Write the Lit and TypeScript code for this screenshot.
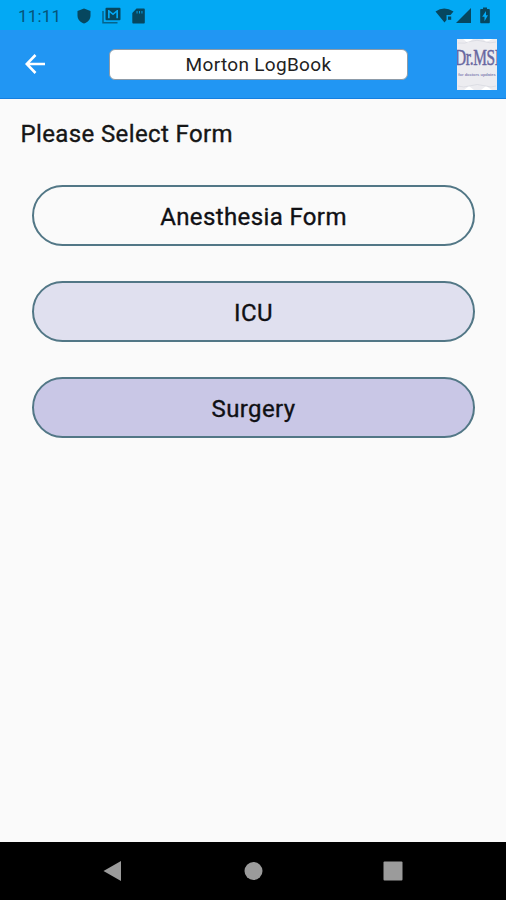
import { LitElement, html, svg, css } from "lit";
import { customElement, property } from "lit/decorators.js";
import { classMap } from "lit/directives/class-map.js";

@customElement("status-bar")
class StatusBar extends LitElement {
  static styles = css`
    :host { display: flex; height: 30px; background: #03a9f4; color: #06475f; align-items: center; box-sizing: border-box; padding: 1px 16px 0 18px; }
    .time { font: 400 17px/20px Roboto, sans-serif; letter-spacing: 0.2px; color: #065478; width: 59px; }
    svg { display: block; fill: currentColor; flex: none; }
    .shield { width: 14px; height: 16px; }
    .mail { width: 19px; height: 17px; margin-left: 11px; }
    .card { width: 13px; height: 16px; margin-left: 11px; }
    .gap { flex: 1; }
    .wifi { width: 19px; height: 16px; }
    .signal { width: 15px; height: 15px; margin-left: 2px; }
    .battery { width: 10px; height: 17px; margin-left: 9px; }
  `;
  render() {
    return html`
      <span class="time">11:11</span>
      <svg class="shield" viewBox="0 0 14 16"><path d="M7 0.500 13.500 3V7.500C13.500 11.300 10.800 14.300 7 15.500 3.200 14.300.5 11.300.5 7.500V3Z" /></svg>
      <svg class="mail" viewBox="0 0 19 17">
        <path d="M1 4V15.700H15.500" fill="none" stroke="currentColor" stroke-width="1.500" opacity=".7" />
        <path fill-rule="evenodd" d="M4.500.7H17.500Q18.500.7 18.500 1.700V12.300Q18.500 13.300 17.500 13.300H4.500Q3.500 13.300 3.500 12.300V1.700Q3.500.7 4.500.7ZM6 3V11.300H7.700V5.500L11 8.300 14.300 5.500V11.300H16V3H15L11 6.300 7 3Z" />
      </svg>
      <svg class="card" viewBox="0 0 13 16"><path fill-rule="evenodd" d="M4.500.5H12Q12.800.5 12.800 1.500V14.500Q12.800 15.500 12 15.500H1.200Q.3 15.500.3 14.500V5ZM4.600 3V5.500H5.500V3ZM7 3V5.500H7.900V3ZM9.500 3V5.500H10.400V3Z" /></svg>
      <span class="gap"></span>
      <svg class="wifi" viewBox="0 0 19 16">
        <path d="M.5 3.500Q9-2.500 18.500 3.500L15.500 7H11.500V12L9.500 14.500Z" />
        <path d="M13 8.500H16.200V11.800H13Z" />
      </svg>
      <svg class="signal" viewBox="0 0 15 15"><path d="M15 0V15H0Z" /></svg>
      <svg class="battery" viewBox="0 0 10 17"><path fill-rule="evenodd" d="M3 .5H7V2H9Q9.800 2 9.800 3V15.200Q9.800 16.200 9 16.200H1Q.2 16.200.2 15.200V3Q.2 2 1 2H3ZM6 4 2.200 9.800H4.500V14.200L8 8.300H6Z" /></svg>
    `;
  }
}

@customElement("brand-badge")
class BrandBadge extends LitElement {
  static styles = css`
    :host { display: flex; flex-direction: column; align-items: center; width: 40px; height: 51px; background: #ececf0; overflow: hidden; position: relative; }
    svg { position: absolute; inset: 0; fill: none; stroke: #d2d3dc; }
    .name { font: 400 23px/24px "Liberation Serif", serif; color: #6867a0; transform: scaleX(0.67); white-space: nowrap; margin-top: 7px; -webkit-text-stroke: 0.5px #6867a0; letter-spacing: -0.5px; }
    .tag { font: 700 4px/5px "Liberation Sans", sans-serif; color: #8584b4; white-space: nowrap; margin-top: 2px; }
  `;
  render() {
    return html`
      <svg width="40" height="51" viewBox="0 0 40 51">
        <path d="M6 0H16L11 4ZM26 0H36L29 3ZM7 51 12 47 17 51ZM24 51 29 47 35 51Z" fill="#fff" stroke="none" />
        <path d="M1 4Q8 5 13 2.500 20 0 27 2.500 33 5 39 3M1 47Q7 49 12 47 20 44 29 47 34 49 39 47" opacity=".6" />
      </svg>
      <span class="name">Dr.MSI</span>
      <span class="tag">for doctors updates</span>
    `;
  }
}

@customElement("form-button")
class FormButton extends LitElement {
  static styles = css`
    :host { display: block; }
    .pill { display: block; width: 100%; height: 61px; box-sizing: border-box; border: 2px solid #527786; border-radius: 31px; background: #fafafa; color: #101014; font: 400 24px/28px Roboto, sans-serif; -webkit-text-stroke: 0.35px #101014; letter-spacing: 0.38px; padding: 2px 0 0; }
    .light { background: #e0e0ef; }
    .deep { background: #c9c7e6; }
  `;
  @property() label = "";
  @property() tone = "plain";
  render() {
    return html`<button class=${classMap({ pill: true, [this.tone]: true })}>${this.label}</button>`;
  }
}

@customElement("app-root")
class AppRoot extends LitElement {
  static styles = css`
    :host { display: flex; flex-direction: column; height: 900px; background: #fafafa; font-family: Roboto, sans-serif; }
    header { display: flex; align-items: center; height: 69px; box-sizing: border-box; background: #2196f3; border-bottom: 1px solid #147fe0; padding: 0 9px 0 25px; }
    .back { width: 21px; height: 20px; fill: none; stroke: #fff; stroke-width: 2.600; }
    .title { width: 299px; height: 31px; box-sizing: border-box; margin: 0 auto 0 63px; background: #fff; border: 1px solid #8d9ba8; border-radius: 6px; text-align: center; font: 400 19px/29px Roboto, sans-serif; color: #222; letter-spacing: 0.32px; }
    main { flex: 1; padding: 20px 31px 0 32px; }
    h1 { margin: 0 0 36px -11.500px; font: 400 24px/30px Roboto, sans-serif; -webkit-text-stroke: 0.35px #161616; letter-spacing: 0.38px; color: #161616; }
    .forms { display: flex; flex-direction: column; gap: 35px; }
    nav { height: 58px; background: #000; display: flex; justify-content: space-between; align-items: center; box-sizing: border-box; padding: 0 103px; }
    nav svg { width: 20px; height: 22px; fill: #9b9b9b; }
  `;
  render() {
    const forms = [
      { label: "Anesthesia Form", tone: "plain" },
      { label: "ICU", tone: "light" },
      { label: "Surgery", tone: "deep" },
    ];
    const keys = [
      svg`<path d="M0.500 11 18 1V21Z" />`,
      svg`<circle cx="10.500" cy="11" r="9" />`,
      svg`<rect x="0.500" y="1.500" width="19" height="19" rx="1" />`,
    ];
    return html`
      <status-bar></status-bar>
      <header>
        <svg class="back" viewBox="0 0 21 20"><path d="M20 10H2M10.500 1 1.700 10 10.500 19" /></svg>
        <div class="title">Morton LogBook</div>
        <brand-badge></brand-badge>
      </header>
      <main>
        <h1>Please Select Form</h1>
        <div class="forms">
          ${forms.map((f) => html`<form-button .label=${f.label} .tone=${f.tone}></form-button>`)}
        </div>
      </main>
      <nav>${keys.map((k) => html`<svg viewBox="0 0 20 22">${k}</svg>`)}</nav>
    `;
  }
}
